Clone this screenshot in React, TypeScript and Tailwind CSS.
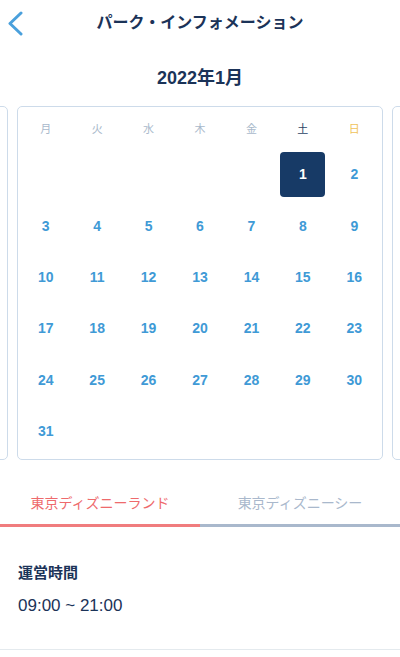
import React from "react";

const FONT = { fontFamily: '"Liberation Sans", "Noto Sans CJK JP", sans-serif' };

function Card({ active }: { active?: boolean }) {
  const heads = ["月", "火", "水", "木", "金", "土", "日"];
  const cells: (number | null)[] = [null, null, null, null, null, 1, 2];
  for (let d = 3; d <= 31; d++) cells.push(d);
  return (
    <div className="w-[366px] h-[354px] shrink-0 rounded-[5px] border border-[#cddbea] bg-white px-[2px] pt-[6px]">
      {active && (
        <>
          <div className="grid grid-cols-7 h-[32px] items-center text-[11px]">
            {heads.map((h, i) => (
              <div
                key={h}
                className={
                  "text-center " +
                  (i === 5 ? "text-[#2c4466]" : i === 6 ? "text-[#f0c35a]" : "text-[#a9b9cb]")
                }
              >
                {h}
              </div>
            ))}
          </div>
          <div className="grid grid-cols-7 auto-rows-[51.4px] mt-[4px]">
            {cells.map((d, i) => (
              <div key={i} className="flex items-center justify-center">
                {d === 1 ? (
                  <div className="w-[45px] h-[45px] rounded-[4px] bg-[#173a66] flex items-center justify-center text-white text-[14px] font-bold">
                    1
                  </div>
                ) : d ? (
                  <span className="text-[14px] font-bold text-[#3f9ad6]">{d}</span>
                ) : null}
              </div>
            ))}
          </div>
        </>
      )}
    </div>
  );
}

export default function App() {
  return (
    <div className="w-[400px] h-[657px] bg-white overflow-hidden" style={FONT}>
      <div className="grid grid-cols-[48px_1fr_48px] h-[46px] items-center">
        <div className="flex items-center pl-[6px]">
          <svg width="20" height="26" viewBox="0 0 20 26">
            <path d="M15 3 L4 13.5 L15 24" fill="none" stroke="#4aa0dc" strokeWidth="3" strokeLinecap="round" strokeLinejoin="round" />
          </svg>
        </div>
        <div className="text-center text-[16px] font-bold text-[#1b3358]">パーク・インフォメーション</div>
        <div />
      </div>
      <div className="mt-[20px] h-[24px] flex items-center justify-center text-[18px] font-bold text-[#1b3358]">
        2022年1月
      </div>
      <div className="mt-[16px] flex justify-center gap-[9px] overflow-hidden">
        <Card />
        <Card active />
        <Card />
      </div>
      <div className="mt-[18px] grid grid-cols-2">
        <div className="h-[49px] pt-[4px] flex items-center justify-center border-b-[3px] border-[#f07c7e] text-[14px] text-[#ee6a6c]">
          東京ディズニーランド
        </div>
        <div className="h-[49px] pt-[4px] flex items-center justify-center border-b-[3px] border-[#a9b8cc] text-[14px] text-[#a9b8cc]">
          東京ディズニーシー
        </div>
      </div>
      <div className="px-[18px] pt-[35px] pb-[32px] border-b border-[#e4eaee]">
        <div className="h-[22px] flex items-center text-[15px] font-bold text-[#1b3358]">運営時間</div>
        <div className="mt-[11px] h-[22px] flex items-center text-[17px] text-[#1b3358]">09:00 ~ 21:00</div>
      </div>
    </div>
  );
}
